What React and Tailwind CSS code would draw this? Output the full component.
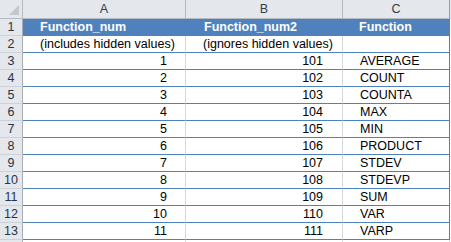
import React from 'react';

const rows = [
  ['1', '101', 'AVERAGE'],
  ['2', '102', 'COUNT'],
  ['3', '103', 'COUNTA'],
  ['4', '104', 'MAX'],
  ['5', '105', 'MIN'],
  ['6', '106', 'PRODUCT'],
  ['7', '107', 'STDEV'],
  ['8', '108', 'STDEVP'],
  ['9', '109', 'SUM'],
  ['10', '110', 'VAR'],
  ['11', '111', 'VARP'],
];

const font = { fontFamily: '"Liberation Sans", Arial, sans-serif' };

const RowHead = ({ n, last }) => (
  <div className={`w-[23px] shrink-0 flex items-center justify-center bg-[#e4e7eb] border-r border-r-[#a6acb5] text-[#2a3445] ${last ? '' : 'border-b border-b-[#cdd2d8]'}`}>
    {n}
  </div>
);

const App = () => {
  return (
    <div className="w-[451px] h-[242px] overflow-hidden bg-white text-[12.5px] leading-[16px] text-black" style={font}>
      {/* column letters */}
      <div className="flex h-[19px] bg-[#e4e7eb] border-b border-b-[#b4bac2] text-[#333d4a]">
        <div className="w-[23px] shrink-0 border-r border-r-[#b4bac2] relative">
          <svg className="absolute right-[3px] bottom-[3px]" width="10" height="10" viewBox="0 0 10 10">
            <polygon points="10,0 10,10 0,10" fill="#c3c8ce" />
          </svg>
        </div>
        <div className="w-[163px] shrink-0 border-r border-r-[#b4bac2] flex items-center justify-center">A</div>
        <div className="w-[157px] shrink-0 border-r border-r-[#b4bac2] flex items-center justify-center">B</div>
        <div className="w-[107px] shrink-0 border-r border-r-[#9aa0a8] flex items-center justify-center">C</div>
      </div>

      {/* row 1: table header */}
      <div className="flex h-[17px]">
        <RowHead n="1" />
        <div
          className="flex w-[427px] shrink-0 bg-[#4f81bd] text-white font-bold border-b border-b-[#4f81bd] text-[12.5px]"
          style={{ fontFamily: '"Liberation Sans Narrow", "Liberation Sans", Arial, sans-serif' }}
        >
          <div className="w-[163px] shrink-0 pl-[17px] flex items-center">Function_num</div>
          <div className="w-[157px] shrink-0 pl-[18px] flex items-center">Function_num2</div>
          <div className="w-[107px] shrink-0 pl-[16px] flex items-center">Function</div>
        </div>
      </div>

      {/* row 2 */}
      <div className="flex h-[17px]">
        <RowHead n="2" />
        <div className="w-[163px] shrink-0 pl-[17px] flex items-center border-r border-r-[#d4d7db] border-b border-b-[#4f81bd] whitespace-nowrap">(includes hidden values)</div>
        <div className="w-[157px] shrink-0 pl-[17px] flex items-center border-r border-r-[#d4d7db] border-b border-b-[#4f81bd] whitespace-nowrap">(ignores hidden values)</div>
        <div className="w-[107px] shrink-0 border-r border-r-[#4f81bd] border-b border-b-[#4f81bd]"></div>
      </div>

      {rows.map((r, i) => (
        <div key={i} className="flex h-[17px]">
          <RowHead n={i + 3} />
          <div className="w-[163px] shrink-0 pr-[18px] flex items-center justify-end border-r border-r-[#d4d7db] border-b border-b-[#4f81bd]">{r[0]}</div>
          <div className="w-[157px] shrink-0 pr-[19px] flex items-center justify-end border-r border-r-[#d4d7db] border-b border-b-[#4f81bd]">{r[1]}</div>
          <div className="w-[107px] shrink-0 pl-[17px] flex items-center border-r border-r-[#4f81bd] border-b border-b-[#4f81bd]">{r[2]}</div>
        </div>
      ))}

      {/* next row, only its top edge shows */}
      <div className="flex h-[17px]">
        <RowHead n="" last />
        <div className="w-[163px] shrink-0 border-r border-r-[#d4d7db]"></div>
        <div className="w-[157px] shrink-0 border-r border-r-[#d4d7db]"></div>
        <div className="w-[107px] shrink-0 border-r border-r-[#d4d7db]"></div>
      </div>
    </div>
  );
};

export default App;
